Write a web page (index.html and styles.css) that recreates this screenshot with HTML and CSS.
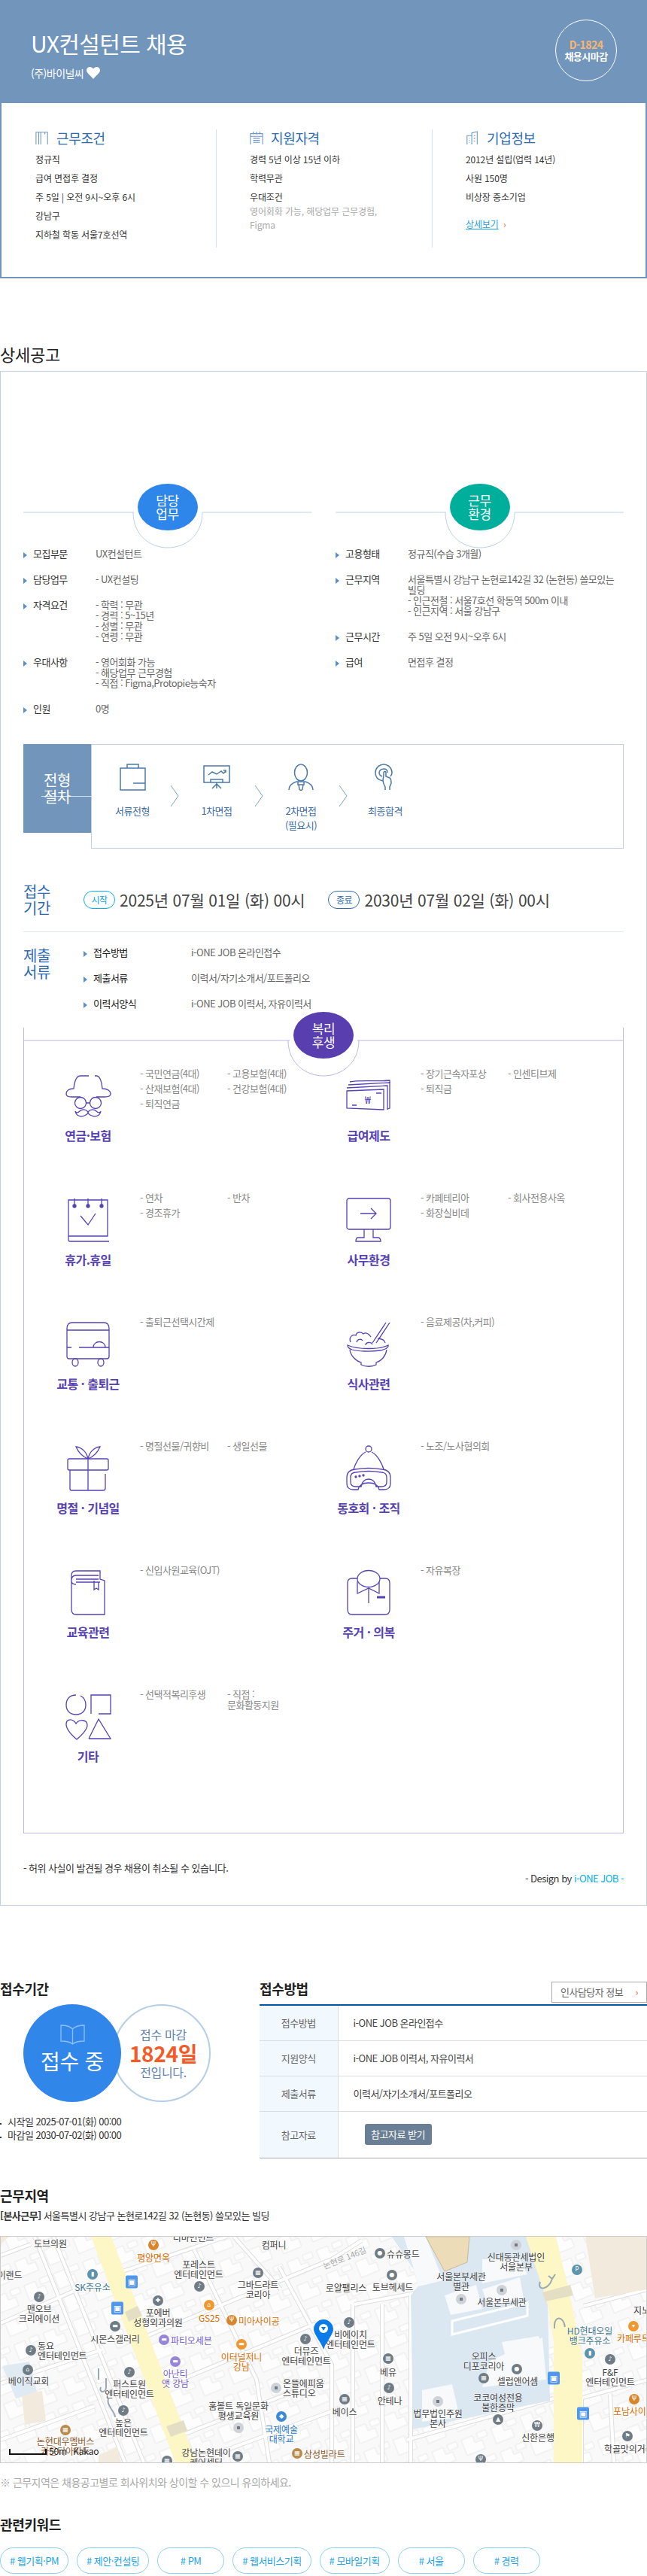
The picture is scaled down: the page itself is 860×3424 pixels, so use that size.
FILE: index.html
```html
<!DOCTYPE html>
<html lang="ko">
<head>
<meta charset="utf-8">
<title>UX컨설턴트 채용</title>
<link rel="stylesheet" href="styles.css">
</head>
<body>
<header class="top">
  <div class="hero">
    <div class="hero-text">
      <h1 class="hero-title">UX컨설턴트 채용</h1>
      <p class="hero-company">(주)바이널씨
        <svg class="heart" viewBox="0 0 18 16"><path d="M9 16C5 11 0 8 0 4.500C0 1.800 2 0 4.500 0C6.500 0 8 1 9 2.500C10 1 11.500 0 13.500 0C16 0 18 1.800 18 4.500C18 8 13 11 9 16Z"/></svg>
      </p>
    </div>
    <div class="hero-badge"><b class="hero-dday">D-1824</b><b>채용시마감</b></div>
  </div>
  <div class="summary">
    <section class="sum-col">
      <h2 class="sum-title">
        <svg class="sum-icon" viewBox="0 0 20 20"><path d="M1 20V2H18V20M5 20V2M8 20V2M14 2V5"/></svg>
        근무조건</h2>
      <ul class="sum-list">
        <li>정규직</li><li>급여 면접후 결정</li><li>주 5일 | 오전 9시~오후 6시</li><li>강남구</li><li>지하철 학동 서울7호선역</li>
      </ul>
    </section>
    <section class="sum-col">
      <h2 class="sum-title">
        <svg class="sum-icon" viewBox="0 0 20 20"><path d="M1 20V4H19V20M5 1V5M10 1V5M15 1V5M1 8H19M5 11H15M5 14H15M5 17H15"/></svg>
        지원자격</h2>
      <ul class="sum-list">
        <li>경력 5년 이상 15년 이하</li><li>학력무관</li><li>우대조건</li>
        <li class="sum-sub">영어회화 가능, 해당업무 근무경험, Figma</li>
      </ul>
    </section>
    <section class="sum-col">
      <h2 class="sum-title">
        <svg class="sum-icon" viewBox="0 0 20 20"><path d="M2 20V7H9V20M9 20V3L17 1V20M5 11H6M5 14H6M5 17H6M12 7H14M12 11H14M12 15H14"/></svg>
        기업정보</h2>
      <ul class="sum-list">
        <li>2012년 설립(업력 14년)</li><li>사원 150명</li><li>비상장 중소기업</li>
      </ul>
      <a class="sum-more"><span class="sum-more-link">상세보기</span> <span class="sum-more-arrow">›</span></a>
    </section>
  </div>
</header>

<h2 class="detail-heading">상세공고</h2>
<main class="detail">
  <div class="two-cols">
    <section class="info-col">
      <div class="bubble-head">
        <svg class="bubble-lines blue-line" width="383" height="86" viewBox="0 0 383 86"><path d="M0 38H147M238 38H383M146 38C146 68 168 85 192 85C216 85 238 68 238 38"/></svg>
        <div class="bubble bubble-blue">담당<br>업무</div>
      </div>
      <dl class="info-rows">
        <div class="info-row"><dt class="mark">모집부문</dt><dd>UX컨설턴트</dd></div>
        <div class="info-row"><dt class="mark">담당업무</dt><dd>- UX컨설팅</dd></div>
        <div class="info-row"><dt class="mark">자격요건</dt><dd>- 학력 : 무관<br>- 경력 : 5~15년<br>- 성별 : 무관<br>- 연령 : 무관</dd></div>
        <div class="info-row"><dt class="mark">우대사항</dt><dd>- 영어회화 가능<br>- 해당업무 근무경험<br>- 직접 : Figma,Protopie능숙자</dd></div>
        <div class="info-row"><dt class="mark">인원</dt><dd>0명</dd></div>
      </dl>
    </section>
    <section class="info-col">
      <div class="bubble-head">
        <svg class="bubble-lines blue-line" width="383" height="86" viewBox="0 0 383 86"><path d="M0 38H147M238 38H383M146 38C146 68 168 85 192 85C216 85 238 68 238 38"/></svg>
        <div class="bubble bubble-green">근무<br>환경</div>
      </div>
      <dl class="info-rows">
        <div class="info-row"><dt class="mark">고용형태</dt><dd>정규직(수습 3개월)</dd></div>
        <div class="info-row"><dt class="mark">근무지역</dt><dd>서울특별시 강남구 논현로142길 32 (논현동) 쓸모있는 빌딩<br>- 인근전철 : 서울7호선 학동역 500m 이내<br>- 인근지역 : 서울 강남구</dd></div>
        <div class="info-row"><dt class="mark">근무시간</dt><dd>주 5일 오전 9시~오후 6시</dd></div>
        <div class="info-row"><dt class="mark">급여</dt><dd>면접후 결정</dd></div>
      </dl>
    </section>
  </div>

  <section class="proc">
    <h3 class="proc-title">전형<br>절차</h3>
    <div class="proc-body">
      <div class="step">
        <svg class="step-icon" width="40" height="36" viewBox="0 0 40 36"><path d="M4 6H37V35H4ZM13 6V1H28V6M21 26H37"/></svg>
        <p>서류전형</p>
      </div>
      <svg class="step-arrow" width="12" height="28" viewBox="0 0 12 28"><path d="M1 0L11 14L1 28"/></svg>
      <div class="step">
        <svg class="step-icon" width="40" height="36" viewBox="0 0 40 36"><path d="M3 3H37V25H3ZM12 21H28V25H12ZM20 25V33M20 27L14 33M20 27L26 33M9 15L14 11L20 14L26 10L29 13L32 10M29 9H32V12"/></svg>
        <p>1차면접</p>
      </div>
      <svg class="step-arrow" width="12" height="28" viewBox="0 0 12 28"><path d="M1 0L11 14L1 28"/></svg>
      <div class="step">
        <svg class="step-icon" width="40" height="36" viewBox="0 0 40 36"><ellipse cx="20" cy="12" rx="8.500" ry="11"/><path d="M4 35C4 29 8 26 14 24H26C32 26 36 29 36 35M16 24V28H24V24M17 28L18 34L20 36L22 34L23 28"/></svg>
        <p>2차면접<br>(필요시)</p>
      </div>
      <svg class="step-arrow" width="12" height="28" viewBox="0 0 12 28"><path d="M1 0L11 14L1 28"/></svg>
      <div class="step">
        <svg class="step-icon" width="40" height="36" viewBox="0 0 40 36"><path d="M17 23C11 22 7 18 7 12C7 6 12 1 18 1C24 1 29 6 29 12C29 14 28 16 27 17M16 17C13 16 12 14 12 12C12 9 15 7 18 7C21 7 23 9 23 12M18 15V12C18 10 21 10 21 12V17L26 19C28 20 28 23 28 26L26 31V35M18 15L17 22C17 26 19 29 20 31V35"/></svg>
        <p>최종합격</p>
      </div>
    </div>
  </section>

  <section class="period">
    <h3 class="side-title">접수<br>기간</h3>
    <span class="pill pill-start">시작</span><span class="date">2025년 07월 01일 (화) 00시</span>
    <span class="pill pill-end">종료</span><span class="date">2030년 07월 02일 (화) 00시</span>
  </section>

  <section class="docs">
    <h3 class="side-title">제출<br>서류</h3>
    <dl class="doc-rows">
      <div class="doc-row"><dt class="mark">접수방법</dt><dd>i-ONE JOB 온라인접수</dd></div>
      <div class="doc-row"><dt class="mark">제출서류</dt><dd>이력서/자기소개서/포트폴리오</dd></div>
      <div class="doc-row"><dt class="mark">이력서양식</dt><dd>i-ONE JOB 이력서, 자유이력서</dd></div>
    </dl>
  </section>

  <section class="welfare">
    <div class="bubble-head welfare-head">
      <svg class="bubble-lines purple-line" width="798" height="86" viewBox="0 0 798 86"><path d="M0.500 72V21M797.500 72V21M0 38H354M444 38H798M352 38C352 68 375 85 399 85C423 85 446 68 446 38"/></svg>
      <div class="bubble bubble-purple">복리<br>후생</div>
    </div>
    <div class="welfare-grid">
      <article class="wf-item">
        <div class="wf-side">
          <svg class="wf-icon" viewBox="0 0 60 60"><path d="M31 3H20C14 3 12 10 11 20C4 20 1 23 1 27C1 30 4 31 8 31H20M41 31H52C57 31 60 30 60 27C60 23 56 20 49 20C48 10 46 3 41 3H39M13 39H12M27 39H33"/><circle cx="20" cy="39" r="7.500"/><circle cx="40" cy="39" r="7.500"/><path d="M30 51C27 47 22 47 19 50C16 53 14 52 13 50C14 56 20 58 25 56C28 55 30 53 30 51C30 53 32 55 35 56C40 58 46 56 47 50C46 52 44 53 41 50C38 47 33 47 30 51Z"/></svg>
          <h4>연금·보험</h4>
        </div>
        <ul class="wf-list"><li>- 국민연금(4대)</li><li>- 고용보험(4대)</li><li>- 산재보험(4대)</li><li>- 건강보험(4대)</li><li>- 퇴직연금</li></ul>
      </article>
      <article class="wf-item">
        <div class="wf-side">
          <svg class="wf-icon" viewBox="0 0 60 60"><path d="M1 23L50 21L50 48L1 46ZM1 19L55 16V48M3 15L58 12V46L55 47M5 11C20 8 40 11 58 9V44M8 42H14M40 26H47"/><text class="won" x="25" y="40">₩</text></svg>
          <h4>급여제도</h4>
        </div>
        <ul class="wf-list"><li>- 장기근속자포상</li><li>- 인센티브제</li><li>- 퇴직금</li></ul>
      </article>
      <article class="wf-item">
        <div class="wf-side">
          <svg class="wf-icon" viewBox="0 0 60 60"><path d="M4 3H56V51H4ZM4 51V56Q4 58 6 58H58M12 1V11M30 1V11M48 1V11M20 24L30 36L40 21"/><circle class="wf-dot" cx="12" cy="11" r="2"/><circle class="wf-dot" cx="30" cy="11" r="2"/><circle class="wf-dot" cx="48" cy="11" r="2"/></svg>
          <h4>휴가.휴일</h4>
        </div>
        <ul class="wf-list"><li>- 연차</li><li>- 반차</li><li>- 경조휴가</li></ul>
      </article>
      <article class="wf-item">
        <div class="wf-side">
          <svg class="wf-icon" viewBox="0 0 60 60"><rect x="1" y="1" width="58" height="41" rx="3"/><path d="M19 21H40M33 14L40 21L33 28M24 42V53H16Q13 53 13 58H46Q46 53 42 53H36V42"/></svg>
          <h4>사무환경</h4>
        </div>
        <ul class="wf-list"><li>- 카페테리아</li><li>- 회사전용사옥</li><li>- 화장실비데</li></ul>
      </article>
      <article class="wf-item">
        <div class="wf-side">
          <svg class="wf-icon" viewBox="0 0 60 60"><path d="M9 1H51Q58 1 58 9V46Q58 49 55 49H5Q2 49 2 46V9Q2 1 9 1ZM2 11H58M2 34H8M18 34H58M37 34C37 24 53 24 53 34"/><ellipse cx="13" cy="54" rx="4" ry="5"/><ellipse cx="47" cy="54" rx="4" ry="5"/></svg>
          <h4>교통 · 출퇴근</h4>
        </div>
        <ul class="wf-list"><li>- 출퇴근선택시간제</li></ul>
      </article>
      <article class="wf-item">
        <div class="wf-side">
          <svg class="wf-icon" viewBox="0 0 60 60"><path d="M58 1L40 28M53 1L35 28M6 27C3 20 9 16 13 18C14 13 20 13 23 16C27 13 31 17 33 20M42 22C47 22 52 25 52 28M14 27C15 23 20 22 22 25M26 31C26 27 33 26 35 30M2 31C15 37 45 37 56 31C57 34 52 37 45 38C32 40 15 39 8 37C5 36 2 34 2 31ZM5 37C6 45 13 52 20 54V57C26 60 35 60 40 57V54C47 52 53 45 54 37"/></svg>
          <h4>식사관련</h4>
        </div>
        <ul class="wf-list"><li>- 음료제공(차,커피)</li></ul>
      </article>
      <article class="wf-item">
        <div class="wf-side">
          <svg class="wf-icon" viewBox="0 0 60 60"><path d="M30 17C22 14 17 8 14 1C22 2 28 8 30 17C32 8 38 2 46 1C43 8 38 14 30 17ZM5 17H55Q57 17 57 19V30Q57 32 55 32H5Q3 32 3 30V19Q3 17 5 17ZM6 32V57Q6 59 8 59H50Q53 59 53 56V37M30 17V59"/></svg>
          <h4>명절 · 기념일</h4>
        </div>
        <ul class="wf-list"><li>- 명절선물/귀향비</li><li>- 생일선물</li></ul>
      </article>
      <article class="wf-item">
        <div class="wf-side">
          <svg class="wf-icon" viewBox="0 0 60 60"><circle cx="30" cy="4" r="4"/><path d="M26 8C18 12 12 24 10 31M34 8C42 12 48 24 50 31M1 42Q1 32 12 31Q30 28 48 31Q59 32 59 42V50Q59 58 50 58H44Q42 49 30 49Q18 49 16 58H10Q1 58 1 50ZM6 42Q6 35 13 35Q30 32 47 35Q54 35 54 42V48Q54 54 47 54H40Q38 44 30 44Q22 44 20 54H13Q6 54 6 48Z"/><circle class="wf-dot" cx="13" cy="41" r="1"/><circle class="wf-dot" cx="18" cy="40" r="1"/><circle class="wf-dot" cx="23" cy="39" r="1"/></svg>
          <h4>동호회 · 조직</h4>
        </div>
        <ul class="wf-list"><li>- 노조/노사협의회</li></ul>
      </article>
      <article class="wf-item">
        <div class="wf-side">
          <svg class="wf-icon" viewBox="0 0 60 60"><path d="M46 1H14Q8 1 8 7V52Q8 59 14 59H52V14L46 12ZM8 14Q8 7 14 7H44M14 19Q8 19 8 14M14 12H44M14 16H46M38 14V26L41 24L44 26V16"/></svg>
          <h4>교육관련</h4>
        </div>
        <ul class="wf-list"><li>- 신입사원교육(OJT)</li></ul>
      </article>
      <article class="wf-item">
        <div class="wf-side">
          <svg class="wf-icon" viewBox="0 0 60 60"><ellipse cx="30" cy="11.500" rx="15" ry="11"/><path d="M15 11H8Q2 11 2 17V52Q2 59 8 59H52Q58 59 58 52V17Q58 11 52 11H45M15 15V31L30 24L44 31V15M30 24V44"/><path class="wf-thick" d="M41 36H52"/></svg>
          <h4>주거 · 의복</h4>
        </div>
        <ul class="wf-list"><li>- 자유복장</li></ul>
      </article>
      <article class="wf-item">
        <div class="wf-side">
          <svg class="wf-icon" viewBox="0 0 60 60"><path d="M14 1C6 1 1 6 1 14C1 22 6 27 14 27C22 27 27 22 27 14C27 8 24 4 20 2M34 26V1H60V26H44M14 39C10 32 1 32 1 40C1 47 8 54 15 60C22 54 29 47 29 41C29 34 19 32 14 39ZM31 59L44 33L60 59H31"/></svg>
          <h4>기타</h4>
        </div>
        <ul class="wf-list"><li>- 선택적복리후생</li><li>- 직접 :<br>문화활동지원</li></ul>
      </article>
    </div>
  </section>

  <p class="detail-note">- 허위 사실이 발견될 경우 채용이 취소될 수 있습니다.</p>
  <p class="detail-credit">- Design by <span class="credit-name">i-ONE JOB -</span></p>
</main>

<div class="apply">
  <section class="apply-left">
    <h2 class="sec-title">접수기간</h2>
    <div class="gauge">
      <div class="gauge-main">
        <svg class="gauge-book" width="33" height="27" viewBox="0 0 33 27"><path d="M16.500 6C13 2 7 1 1 1V22C7 22 13 23 16.500 26C20 23 26 22 32 22V1C26 1 20 2 16.500 6ZM16.500 6V26"/></svg>
        <span class="gauge-now">접수 중</span>
      </div>
      <div class="gauge-side">
        <span>접수 마감</span>
        <b class="gauge-days">1824일</b>
        <span>전입니다.</span>
      </div>
    </div>
    <ul class="period-list">
      <li>시작일 2025-07-01(화) 00:00</li>
      <li>마감일 2030-07-02(화) 00:00</li>
    </ul>
  </section>
  <section class="apply-right">
    <div class="apply-head">
      <h2 class="sec-title">접수방법</h2>
      <a class="hr-btn">인사담당자 정보<span class="hr-arrow">›</span></a>
    </div>
    <table class="apply-table">
      <tr><th>접수방법</th><td>i-ONE JOB 온라인접수</td></tr>
      <tr><th>지원양식</th><td>i-ONE JOB 이력서, 자유이력서</td></tr>
      <tr><th>제출서류</th><td>이력서/자기소개서/포트폴리오</td></tr>
      <tr class="row-last"><th>참고자료</th><td><a class="ref-btn">참고자료 받기</a></td></tr>
    </table>
  </section>
</div>

<section class="location">
  <h2 class="sec-title">근무지역</h2>
  <p class="address"><b>[본사근무]</b> 서울특별시 강남구 논현로142길 32 (논현동) 쓸모있는 빌딩</p>
  <div class="map">
    <svg class="map-base" width="860" height="300" viewBox="0 0 860 300">
      <defs>
        <pattern id="lots" width="42" height="34" patternUnits="userSpaceOnUse" patternTransform="rotate(-22)">
          <rect width="42" height="34" fill="#f9f9f9"/>
          <path d="M4 4H20V14H30V26H4Z" fill="#fdfdfd" stroke="#e9e9e9"/>
          <path d="M26 3H39V11H26Z" fill="#fdfdfd" stroke="#e9e9e9"/>
        </pattern>
      </defs>
      <rect width="860" height="300" fill="url(#lots)"/>
      <g class="streets-case">
        <path d="M0 115L120 62M150 50L300 0M0 195L135 150M175 140L440 30L480 5M0 270L125 225M240 190L420 115M245 262L430 190M260 298L440 232M45 0L165 300M70 0L190 300M257 17L340 190L357 300M310 0L372 70M370 40L440 170L440 300M468 90V300M507 90V300M545 78V300M0 25L40 10M540 270L735 215M770 215L860 190M775 92L860 70M772 215V300M810 210L815 300M470 90L545 76L700 40"/>
      </g>
      <g class="streets">
        <path d="M0 115L120 62M150 50L300 0M0 195L135 150M175 140L440 30L480 5M0 270L125 225M240 190L420 115M245 262L430 190M260 298L440 232M45 0L165 300M70 0L190 300M257 17L340 190L357 300M310 0L372 70M370 40L440 170L440 300M468 90V300M507 90V300M545 78V300M0 25L40 10M540 270L735 215M770 215L860 190M775 92L860 70M772 215V300M810 210L815 300M470 90L545 76L700 40"/>
      </g>
      <path class="map-blue" d="M520 0H700L727 90L730 218L548 256L545 78L560 60Z"/>
      <path class="map-block" d="M536 0H565L588 58L556 66ZM640 30H690L700 50L640 62ZM590 78L632 64L640 96L598 104ZM640 70L690 54L695 82L648 92ZM560 204L600 196L610 240L560 246ZM650 165L720 134L725 190L640 200ZM666 140L715 132L720 148L670 156Z"/>
      <path class="map-tan" d="M565 0H623L620 34L590 46Z"/>
      <path class="map-beige" d="M777 0H860V70L790 82ZM0 0H10L0 10ZM28 210L55 205L60 245L32 250ZM130 290L155 280L160 300H130Z"/>
      <path class="map-blue-soft" d="M2 172L38 166L48 206L20 215Z"/>
      <path class="map-road" d="M120 0H147L260 300H232ZM698 0H738L757 80L773 160V300H735V140L727 90Z"/>
      <path class="map-road-mark" d="M165 100L182 92L188 105L170 113ZM220 252L243 244L248 258L226 266ZM720 74L757 64L761 78L724 86Z"/>
      <path class="map-turn" d="M130 175V190M133 200C130 208 140 208 140 200V188M717 60C712 72 728 72 733 56M728 52L733 56L737 50M750 120C748 105 736 105 736 118V122M143 215C140 225 152 232 152 240"/>
      <path class="map-block-line" d="M600 130L700 105V88L600 112Z"/>
    </svg>

    <span class="lbl" style="left:66px;top:8px">도브의원</span>
    <span class="lbl orange" style="left:203px;top:27px">평양면옥</span>
    <span class="lbl" style="left:256px;top:0">디바인먼트</span>
    <span class="lbl" style="left:363px;top:10px">컴퍼니</span>
    <span class="lbl" style="left:263px;top:43px">포레스트<br>엔터테인먼트</span>
    <span class="lbl" style="left:12px;top:50px">이랜드</span>
    <span class="lbl teal" style="left:122px;top:66px">SK주유소</span>
    <span class="lbl" style="left:342px;top:70px">그바드라트<br>코리아</span>
    <span class="lbl" style="left:51px;top:102px">맨오브<br>크리에이션</span>
    <span class="lbl orange" style="left:277px;top:107px">GS25</span>
    <span class="lbl l orange" style="left:316px;top:111px">미아사이공</span>
    <span class="lbl" style="left:209px;top:107px">포에버<br>성형외과의원</span>
    <span class="lbl" style="left:152px;top:135px">시몬스갤러리</span>
    <span class="lbl l purple" style="left:226px;top:137px">파티오세븐</span>
    <span class="lbl orange" style="left:320px;top:166px">이터널저니<br>강남</span>
    <span class="lbl" style="left:406px;top:158px">더뮤즈<br>엔터테인먼트</span>
    <span class="lbl l" style="left:49px;top:151px">동요<br>엔터테인먼트</span>
    <span class="lbl" style="left:37px;top:191px">베이직교회</span>
    <span class="lbl purple" style="left:232px;top:188px">아난티<br>앳 강남</span>
    <span class="lbl" style="left:171px;top:202px">퍼스트원<br>엔터테인먼트</span>
    <span class="lbl l" style="left:375px;top:201px">온뜰에피움<br>스튜디오</span>
    <span class="lbl" style="left:316px;top:231px">훔볼트 독일문화<br>평생교육원</span>
    <span class="lbl blue" style="left:373px;top:262px">국제예술<br>대학교</span>
    <span class="lbl" style="left:163px;top:253px">높은<br>엔터테인먼트</span>
    <span class="lbl brown" style="left:86px;top:278px">논현대우멤버스<br>카운티아파트</span>
    <span class="lbl" style="left:273px;top:293px">강남논현데이<br>케어센터</span>
    <span class="lbl l brown" style="left:403px;top:288px">삼성빌라트</span>
    <span class="lbl l" style="left:513px;top:22px">슈슈몽드</span>
    <span class="lbl" style="left:685px;top:33px">신대동관세법인<br>서울본부</span>
    <span class="lbl" style="left:459px;top:67px">로얄팰리스</span>
    <span class="lbl" style="left:521px;top:66px">토브헤세드</span>
    <span class="lbl" style="left:612px;top:59px">서울본부세관<br>별관</span>
    <span class="lbl" style="left:666px;top:86px">서울본부세관</span>
    <span class="lbl road" style="left:457px;top:28px">논현로 146길</span>
    <span class="lbl" style="left:465px;top:136px">비에이치<br>엔터테인먼트</span>
    <span class="lbl teal" style="left:783px;top:131px">HD현대오일<br>뱅크주유소</span>
    <span class="lbl l orange" style="left:819px;top:134px">카페루트</span>
    <span class="lbl" style="left:852px;top:97px">지노</span>
    <span class="lbl" style="left:642px;top:165px">오피스<br>디포코리아</span>
    <span class="lbl" style="left:515px;top:179px">베유</span>
    <span class="lbl" style="left:687px;top:191px">셀럽앤어셈</span>
    <span class="lbl" style="left:810px;top:186px">F&amp;F<br>엔터테인먼트</span>
    <span class="lbl" style="left:517px;top:217px">안테나</span>
    <span class="lbl" style="left:661px;top:220px">코코여성전용<br>불한증막</span>
    <span class="lbl" style="left:457px;top:232px">베이스</span>
    <span class="lbl" style="left:581px;top:241px">법무법인주원<br>본사</span>
    <span class="lbl l orange" style="left:814px;top:231px">포남사이</span>
    <span class="lbl" style="left:714px;top:266px">신한은행</span>
    <span class="lbl l" style="left:802px;top:281px">학골맛의거리</span>

    <span class="pin orange-b" style="left:203px;top:11px">Ψ</span>
    <span class="pin teal-b" style="left:122px;top:50px">▮</span>
    <span class="bus" style="left:174px;top:60px">▣</span>
    <span class="bus" style="left:155px;top:95px">▣</span>
    <span class="pin" style="left:264px;top:66px">♪</span>
    <span class="pin" style="left:342px;top:48px">▦</span>
    <span class="pin" style="left:51px;top:80px">♪</span>
    <span class="pin" style="left:209px;top:85px">✚</span>
    <span class="pin orange-l" style="left:277px;top:91px">⌂</span>
    <span class="pin orange-b" style="left:307px;top:111px">Ψ</span>
    <span class="pin" style="left:152px;top:119px">▬</span>
    <span class="pin" style="left:40px;top:151px">♪</span>
    <span class="pin purple-b" style="left:217px;top:137px">▬</span>
    <span class="pin orange-l" style="left:320px;top:143px">▬</span>
    <span class="pin" style="left:405px;top:136px">♪</span>
    <span class="pin" style="left:36px;top:177px">⌂</span>
    <span class="pin purple-b" style="left:232px;top:166px">▬</span>
    <span class="pin" style="left:171px;top:180px">♪</span>
    <span class="dot" style="left:366px;top:201px"></span>
    <span class="pin" style="left:163px;top:231px">♪</span>
    <span class="pin blue-b" style="left:373px;top:239px">◆</span>
    <span class="dot" style="left:316px;top:254px"></span>
    <span class="pin brown-b" style="left:86px;top:257px">▦</span>
    <span class="pin brown-b" style="left:394px;top:288px">▦</span>
    <span class="pin" style="left:315px;top:292px">▦</span>
    <span class="pin" style="left:221px;top:298px">▦</span>
    <span class="pin" style="left:504px;top:22px">●</span>
    <span class="dot" style="left:685px;top:11px"></span>
    <span class="pin" style="left:520px;top:51px">●</span>
    <span class="pin teal-b" style="left:766px;top:44px">P</span>
    <span class="dot" style="left:612px;top:83px"></span>
    <span class="dot" style="left:666px;top:71px"></span>
    <span class="pin" style="left:463px;top:114px">♪</span>
    <span class="pin orange-l" style="left:841px;top:119px">▾</span>
    <span class="pin teal-b" style="left:783px;top:155px">▮</span>
    <span class="pin" style="left:810px;top:163px">♪</span>
    <span class="pin" style="left:515px;top:162px">▦</span>
    <span class="pin" style="left:686px;top:176px">●</span>
    <span class="pin" style="left:642px;top:188px">▦</span>
    <span class="bus" style="left:735px;top:188px">▣</span>
    <span class="pin" style="left:516px;top:201px">♪</span>
    <span class="pin" style="left:457px;top:216px">▦</span>
    <span class="dot" style="left:581px;top:219px"></span>
    <span class="pin orange-b" style="left:842px;top:216px">Ψ</span>
    <span class="bus" style="left:774px;top:235px">▣</span>
    <span class="pin" style="left:661px;top:243px">▲</span>
    <span class="pin" style="left:713px;top:251px">₩</span>
    <span class="pin" style="left:833px;top:265px">⚑</span>
    <span class="pin" style="left:638px;top:296px">Ψ</span>

    <svg class="map-pin" width="26" height="40" viewBox="0 0 26 40"><path class="pin-body" d="M13 0C6 0 0 6 0 13C0 20 10 30 13 40C16 30 26 20 26 13C26 6 20 0 13 0Z"/><circle class="pin-hole" cx="13" cy="12" r="6"/><path class="pin-v" d="M10 10H16L13 15Z"/></svg>
    <div class="map-scale"><i class="scale-bar"></i><span>50m</span><span class="kakao">Kakao</span></div>
  </div>
  <p class="map-note">※ 근무지역은 채용공고별로 회사위치와 상이할 수 있으니 유의하세요.</p>
</section>

<section class="keywords">
  <h2 class="sec-title">관련키워드</h2>
  <div class="kw-list">
    <a class="kw"># 웹기획·PM</a><a class="kw"># 제안·컨설팅</a><a class="kw"># PM</a><a class="kw"># 웹서비스기획</a><a class="kw"># 모바일기획</a><a class="kw"># 서울</a><a class="kw"># 경력</a>
  </div>
</section>
</body>
</html>
```
FILE: styles.css
```css
* { box-sizing: border-box; }
html, body { margin: 0; padding: 0; }
body {
  width: 860px;
  background: #fff;
  color: #333;
  font-family: "Noto Sans CJK KR", "Noto Sans", sans-serif;
  font-size: 13px;
  letter-spacing: -0.04em;
}
h1, h2, h3, h4, p, ul, dl, dd { margin: 0; padding: 0; font-weight: 400; }
ul { list-style: none; }

/* top summary */
.top { background: #7295bc; padding: 0 2px 2px; }
.hero { height: 137px; display: flex; justify-content: space-between; padding: 26px 38px 0 39px; color: #fff; }
.hero-title { font-size: 30px; line-height: 44px; margin-top: 9px; letter-spacing: -0.02em; }
.hero-company { font-size: 14px; line-height: 20px; margin-top: 8px; display: flex; align-items: center; gap: 4px; }
.heart { width: 18px; height: 16px; fill: #fff; }
.hero-badge { width: 82px; height: 82px; border: 1px solid #fff; border-radius: 50%; display: flex; flex-direction: column; align-items: center; justify-content: center; font-size: 13px; line-height: 15px; }
.hero-dday { color: #f8b56f; font-size: 14px; font-weight: 700; }
.hero-badge b { font-weight: 700; }
.summary { background: #fff; display: grid; grid-template-columns: 285px 287px 1fr; padding: 35px 0 39px; }
.sum-col { height: 157px; padding-left: 45px; }
.sum-col + .sum-col { border-left: 1px solid #d6e2ee; padding-left: 44px; }
.sum-title { font-size: 18px; line-height: 22px; color: #2c6ab2; margin-bottom: 5px; display: flex; align-items: center; gap: 10px; letter-spacing: -0.02em; }
.sum-icon { width: 18px; height: 18px; fill: none; stroke: #6f97c6; stroke-width: 1.200; }
.sum-list { font-size: 12px; letter-spacing: -0.01em; }
.sum-list li { line-height: 25px; }
.sum-list .sum-sub { color: #aaa; line-height: 18px; margin-top: -2px; width: 175px; }
.sum-more { display: block; margin-top: 14px; font-size: 12px; line-height: 20px; color: #1b9fe3; letter-spacing: -0.01em; }
.sum-more-link { text-decoration: underline; }
.sum-more-arrow { color: #e9603a; margin-left: 3px; }

/* detail */
.detail-heading { font-size: 22px; line-height: 30px; margin: 85px 0 8px; color: #222; letter-spacing: -0.01em; }
.detail { border: 1px solid #c1d0e3; padding: 149px 30px 28px; }
.two-cols { display: grid; grid-template-columns: 383px 383px; gap: 32px; height: 346px; }
.bubble-head { position: relative; height: 86px; }
.bubble-lines { position: absolute; left: 0; top: 0; fill: none; }
.blue-line { stroke: #bcd3e6; }
.purple-line { stroke: #bdb8e4; }
.bubble { position: relative; width: 80px; height: 62px; margin: 0 auto; border-radius: 50%; color: #fff; font-size: 17px; line-height: 18px; text-align: center; padding-top: 13px; letter-spacing: -0.02em; }
.bubble-blue { background: #2f86ea; }
.bubble-green { background: #00ae9c; }
.bubble-purple { background: #593eb0; }
.info-rows, .doc-rows { margin: 0; }
.info-row, .doc-row { display: flex; line-height: 14px; margin-bottom: 20px; }
.mark { position: relative; padding-left: 13px; color: #333; flex: none; width: 96px; }
.mark::before { content: ""; position: absolute; left: 0; top: 5px; border-left: 5px solid #5b8fc7; border-top: 4px solid transparent; border-bottom: 4px solid transparent; }
.info-row dd, .doc-row dd { color: #666; }

/* process */
.proc { display: flex; height: 139px; margin-top: 0; }
.proc-title { position: relative; flex: none; width: 90px; height: 118px; background: #7295bc; color: #fff; font-size: 20px; line-height: 22px; text-align: center; padding-top: 37px; letter-spacing: -0.02em; }
.proc-title::after { content: ""; position: absolute; left: 24px; right: 0; top: 69px; height: 1px; background: #fff; opacity: .7; }
.proc-body { flex: 1; border: 1px solid #bfd0e4; padding: 25px 0 0 12px; display: flex; align-items: flex-start; }
.step { width: 84px; text-align: center; color: #3d6ea5; font-weight: 700; line-height: 19px; }
.step-icon { display: block; margin: 0 auto 17px; fill: none; stroke: #4a78ab; stroke-width: 1.500; }
.step-arrow { margin: 29px 8px 0; fill: none; stroke: #7f9fc6; }

/* period and docs */
.side-title { flex: none; width: 80px; font-size: 20px; line-height: 22px; color: #2c6ab2; letter-spacing: -0.02em; }
.period { display: flex; align-items: center; margin-top: 46px; padding-bottom: 20px; border-bottom: 1px solid #dde5ef; }
.pill { flex: none; width: 42px; height: 24px; border: 1px solid #00aeef; border-radius: 12px; text-align: center; font-size: 12px; line-height: 22px; color: #00a5e5; }
.pill-end { border-color: #2c6ab2; color: #2c6ab2; margin-left: 31px; }
.date { font-size: 21px; margin-left: 6px; color: #444; letter-spacing: -0.01em; white-space: nowrap; line-height: 30px; }
.docs { display: flex; padding-top: 20px; }
.doc-row .mark { width: 143px; color: #222; }
.doc-row:last-child { margin-bottom: 0; }

/* welfare */
.welfare { margin-top: 4px; }
.welfare-head { height: 72px; }
.welfare-grid { display: grid; grid-template-columns: 373px 373px; grid-auto-rows: 165px; padding: 3px 0 26px; border: 1px solid #bdb8e4; border-top: 0; }
.wf-item { display: flex; padding-left: 25px; }
.wf-side { flex: none; width: 120px; padding-top: 7px; text-align: center; }
.wf-icon { display: block; width: 60px; height: 60px; margin: 0 auto 12px; fill: none; stroke: #5642b4; stroke-width: 1.300; overflow: visible; }
.wf-icon .wf-dot { fill: #5642b4; }
.wf-icon .wf-thick { stroke-width: 3; }
.wf-icon .won { font-size: 14px; fill: #5642b4; stroke: none; }
.wf-side h4 { font-size: 16px; line-height: 20px; font-weight: 700; color: #5642b4; white-space: nowrap; }
.wf-list { margin-left: 9px; display: grid; grid-template-columns: 116px 116px; align-content: start; color: #888; line-height: 14px; row-gap: 6px; white-space: nowrap; }

.detail-note { margin-top: 39px; line-height: 14px; color: #333; }
.detail-credit { text-align: right; line-height: 14px; color: #333; }
.credit-name { color: #00aeef; }

/* apply */
.apply { display: flex; margin-top: 96px; }
.apply-left { flex: none; width: 345px; }
.apply-right { flex: 1; }
.sec-title { font-size: 18px; line-height: 28px; font-weight: 700; color: #222; letter-spacing: -0.02em; }
.apply-left .sec-title { margin-bottom: 7px; }
.apply-head { display: flex; justify-content: space-between; height: 35px; }
.gauge { display: flex; margin-left: 31px; }
.gauge-main { position: relative; flex: none; width: 130px; height: 130px; border-radius: 50%; background: #3186ea; color: #fff; text-align: center; padding-top: 27px; }
.gauge-book { display: block; margin: 0 auto; fill: none; stroke: #8fbdf3; stroke-width: 1.300; }
.gauge-now { display: block; font-size: 28px; line-height: 34px; margin-top: 4px; letter-spacing: -0.01em; }
.gauge-side { flex: none; width: 130px; height: 130px; margin-left: -11px; border: 2px solid #b3cee6; border-radius: 50%; display: flex; flex-direction: column; align-items: center; justify-content: center; padding-left: 4px; color: #5e83ad; font-size: 16px; line-height: 22px; letter-spacing: -0.02em; }
.gauge-days { color: #f25a28; font-size: 28px; line-height: 28px; font-weight: 700; }
.period-list { margin-top: 17px; }
.period-list li { line-height: 18px; color: #333; }
.period-list li::before { content: ""; display: inline-block; width: 2px; height: 2px; background: #333; margin-right: 8px; vertical-align: 1px; }
.hr-btn { flex: none; width: 127px; height: 28px; margin-top: 5px; border: 1px solid #aaa; padding-left: 11px; display: flex; justify-content: space-between; line-height: 26px; color: #666; }
.hr-arrow { color: #e9603a; margin-right: 11px; }
.apply-table { width: 100%; table-layout: fixed; border-collapse: collapse; border-top: 2px solid #0055a5; }
.apply-table th { width: 104px; font-weight: 400; color: #666; background: #f1f8fe; border-right: 1px solid #ddd; border-bottom: 1px solid #ddd; height: 47px; padding: 0; }
.apply-table td { color: #444; padding: 0 0 0 20px; border-bottom: 1px solid #ddd; height: 47px; }
.apply-table .row-last th, .apply-table .row-last td { height: 62px; border-bottom: 1px solid #aaa; }
.ref-btn { display: inline-block; width: 89px; height: 28px; margin-left: 15px; line-height: 28px; text-align: center; background: #6a7f95; color: #fff; border-radius: 3px; }

/* map */
.location { margin-top: 35px; }
.address { margin-top: 4px; line-height: 18px; }
.address b { font-weight: 700; }
.map { position: relative; height: 302px; margin-top: 18px; border: 1px solid #ccc; overflow: hidden; background: #f9f9f9; letter-spacing: -0.01em; }
.map-base { display: block; position: absolute; left: 0; top: 0; }
.streets-case { fill: none; stroke: #dedede; stroke-width: 6; }
.streets { fill: none; stroke: #fff; stroke-width: 4; }
.map-blue { fill: #dbe7f1; }
.map-block { fill: #f7f9fb; }
.map-tan { fill: #ecdcb8; stroke: #c9b99a; }
.map-beige { fill: #f2ebdd; }
.map-blue-soft { fill: #dfeaf3; }
.map-road { fill: #fdf6c5; }
.map-road-mark { fill: #e4dfc4; }
.map-turn { fill: none; stroke: #9ba9b5; stroke-width: 2; }
.map-block-line { fill: none; stroke: #fff; stroke-width: 3; }
.lbl { position: absolute; transform: translate(-50%, -50%); white-space: nowrap; text-align: center; font-size: 12px; line-height: 13px; color: #444; text-shadow: 0 0 2px #fff; }
.lbl.l { transform: translate(0, -50%); text-align: left; }
.lbl.orange { color: #d46e00; }
.lbl.teal { color: #3e7892; }
.lbl.purple { color: #7561c9; }
.lbl.blue { color: #2a78c2; }
.lbl.brown { color: #8d5a2c; }
.lbl.road { color: #aaa; font-size: 11px; transform: translate(-50%, -50%) rotate(-22deg); }
.pin, .dot, .bus { position: absolute; transform: translate(-50%, -50%); }
.pin { width: 14px; height: 14px; border-radius: 50%; background: #6f7c85; color: #fff; font-family: "DejaVu Sans", sans-serif; font-size: 8px; line-height: 14px; text-align: center; letter-spacing: 0; }
.orange-b { background: #d8862e; }
.orange-l { background: #f0982f; }
.teal-b { background: #5d93ab; }
.purple-b { background: #9685d9; }
.blue-b { background: #3a8ad6; }
.brown-b { background: #b98a4e; }
.dot { width: 14px; height: 14px; border-radius: 50%; background: #cfd2d6; }
.dot::after { content: ""; position: absolute; left: 5px; top: 5px; width: 4px; height: 4px; background: #6f7c85; }
.bus { width: 16px; height: 17px; border-radius: 2px; background: #4f96ef; color: #fff; font-family: "DejaVu Sans", sans-serif; font-size: 11px; line-height: 17px; text-align: center; letter-spacing: 0; }
.map-pin { position: absolute; left: 416px; top: 110px; }
.pin-body { fill: #0a7bea; }
.pin-hole { fill: #fff; }
.pin-v { fill: #0a7bea; }
.map-scale { position: absolute; left: 11px; top: 278px; display: flex; align-items: flex-end; height: 14px; font-size: 12px; line-height: 14px; color: #222; text-shadow: 0 0 2px #fff; }
.scale-bar { display: block; width: 50px; height: 8px; border: 2px solid #111; border-top: 0; margin-bottom: 2px; }
.map-scale span { margin-left: 3px; }
.map-scale .kakao { margin-left: 8px; }
.map-note { margin-top: 15px; line-height: 20px; color: #aaa; font-size: 14px; }

/* keywords */
.keywords { margin-top: 32px; padding-bottom: 3px; }
.kw-list { display: flex; gap: 11px; margin-top: 17px; }
.kw { min-width: 89px; height: 35px; padding: 0 12px; border: 1px solid #8ad0f0; border-radius: 18px; color: #1aa3e8; font-size: 13px; line-height: 33px; text-align: center; white-space: nowrap; }
```
